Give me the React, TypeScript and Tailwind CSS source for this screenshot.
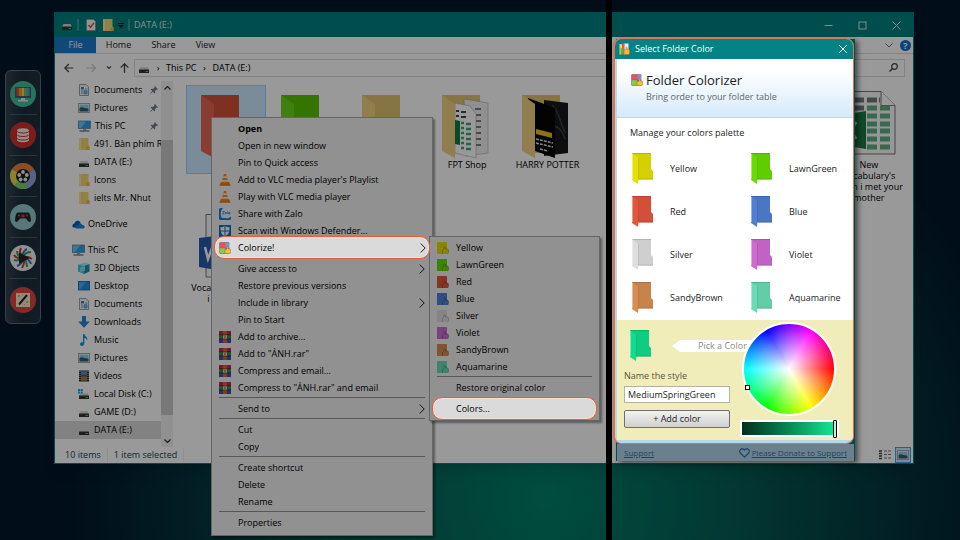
import React, { useState } from "react";
import clsx from "clsx";

const FOLDER_COLORS = [
  { name: "Yellow", color: "#e4e000" },
  { name: "LawnGreen", color: "#66dc00" },
  { name: "Red", color: "#e2563d" },
  { name: "Blue", color: "#4f80d2" },
  { name: "Silver", color: "#dedede" },
  { name: "Violet", color: "#cf6bd0" },
  { name: "SandyBrown", color: "#d68d4f" },
  { name: "Aquamarine", color: "#68dcb6" },
];

/* ---------- small icons ---------- */

const DriveIcon = ({ system = false }: { system?: boolean }) => (
  <svg className="h-3 w-3 shrink-0" viewBox="0 0 12 12">
    <path d="M2.5 5h7L11 8H1z" fill="#d8d8d8" />
    <rect x="1" y="7.5" width="10" height="3.5" rx="0.5" fill="#333" />
    <rect x="7.5" y="9" width="2.5" height="1" fill="#3fd23f" />
    {system && (
      <path d="M0 1h2v2H0zM2.6 1h2.2v2H2.6zM0 3.6h2v2H0zM2.6 3.6h2.2v2H2.6z" fill="#19a8e8" />
    )}
  </svg>
);

const SmallFolderIcon = () => (
  <svg className="h-3 w-3 shrink-0" viewBox="0 0 12 12">
    <path d="M1 0h9.5v7.5l1 1V12H1z" fill="#f5d672" />
    <path d="M1 0l2 1v11L1 11z" fill="#ffe79a" />
    <path d="M8.5 8.5h3V12h-3z" fill="#e5bd4d" />
  </svg>
);

const DocumentIcon = () => (
  <svg className="h-3 w-3 shrink-0" viewBox="0 0 12 12">
    <path d="M1.5.5h6.5l2.5 2.5v8.500h-9z" fill="#f4f6f8" stroke="#7f8a94" strokeWidth="0.8" />
    <path d="M3 3h3v2.500H3z" fill="#3b86c4" />
    <path d="M7 5h2.500M3 7h2M6 6.800h3v3H6zM3 9h2" stroke="#3b86c4" strokeWidth="0.8" fill="#8cc1e6" />
  </svg>
);

const PictureIcon = () => (
  <svg className="h-3 w-3 shrink-0" viewBox="0 0 12 12">
    <rect x="0.400" y="1.500" width="11.200" height="9" fill="#fff" stroke="#8d979e" strokeWidth="0.8" />
    <rect x="1.500" y="2.600" width="9" height="6.800" fill="#8fcdea" />
    <path d="M1.500 6c3-2 5 1 9 .5v2.900h-9z" fill="#2b5f73" />
  </svg>
);

const ComputerIcon = () => (
  <svg className="h-3 w-[13px] shrink-0" viewBox="0 0 13 12">
    <rect x="0.400" y="1" width="12.200" height="7.500" fill="#2e9fe6" stroke="#5c7f98" strokeWidth="0.7" />
    <path d="M1 1.500h7L3 8H1z" fill="#6cc6f7" />
    <path d="M5 9h3v1.500H5z" fill="#9aa7b0" />
    <path d="M1.500 11h10" stroke="#5c6c78" strokeWidth="1.200" />
  </svg>
);

const CloudIcon = () => (
  <svg className="h-3 w-[13px] shrink-0" viewBox="0 0 13 12">
    <path d="M1 9.500C-.5 7.500 1 5.500 2.500 5.500 3 2.500 7 1.800 8.500 4.500L5 9.500z" fill="#0a5db5" />
    <path d="M4 10.500c-1.500-1.500-.5-3.500 1.300-3.500.9-2.300 4-2.300 4.900 0 2.800 0 3.500 3.500.8 3.500z" fill="#1a7fe0" />
  </svg>
);

const CubeIcon = () => (
  <svg className="h-3 w-3 shrink-0" viewBox="0 0 12 12">
    <path d="M0 2.500L7 .5l4.500 1.500-5.500 2z" fill="#a9ecf7" />
    <path d="M0 2.500L6 4v8L0 9.500z" fill="#39c6dd" />
    <path d="M6 4l5.500-2v7.500L6 12z" fill="#1390ac" />
    <path d="M2 5.500l5-1.500v5l-5 .8z" fill="#7fe0ee" />
  </svg>
);

const DesktopIcon = () => (
  <svg className="h-3 w-3 shrink-0" viewBox="0 0 12 12">
    <rect x="0.400" y="1.500" width="11.200" height="8.500" fill="#1e90e8" stroke="#1361a8" strokeWidth="0.8" />
    <path d="M1 2h7L2 9.500H1z" fill="#45abf2" />
  </svg>
);

const DownloadIcon = () => (
  <svg className="h-3 w-3 shrink-0" viewBox="0 0 12 12">
    <path d="M4 0h4v5.500h3.800L6 11.800.2 5.500H4z" fill="#2584d8" />
  </svg>
);

const MusicIcon = () => (
  <svg className="h-3 w-3 shrink-0" viewBox="0 0 12 12">
    <path d="M5 0h1.300c.3 2 3.800 2.800 2.800 6.500C8.800 5 7.500 4.300 6.300 4v5.500C6.300 12.500 2 12.600 2 10.300 2 8.600 4 8 5 8.500z" fill="#1695e6" />
  </svg>
);

const VideoIcon = () => (
  <svg className="h-3 w-3 shrink-0" viewBox="0 0 12 12">
    <rect x="1" y="0.500" width="10" height="11" fill="#2e3238" />
    <rect x="3" y="1.200" width="6" height="4.300" fill="#5c87c8" />
    <rect x="3" y="6.300" width="6" height="4.400" fill="#a97f42" />
    <path d="M2 1v10M10 1v10" stroke="#c8ccd0" strokeWidth="0.9" strokeDasharray="1 1" />
  </svg>
);

const PinIcon = () => (
  <svg className="h-2 w-2 shrink-0" viewBox="0 0 8 8">
    <path d="M4.800 0L8 3.200l-.8.5-.6-.2-1.500 1.600.1 1.600-.7.700L2.900 5.700.3 8 0 7.700l2.300-2.600L.6 3.500l.700-.7 1.600.1L4.500 1.400 4.300.800z" fill="#6f7f8c" />
  </svg>
);

const ColorizerIcon = ({ className = "h-3 w-3" }: { className?: string }) => (
  <svg className={clsx("shrink-0", className)} viewBox="0 0 12 12">
    <rect x="0.300" y="0.300" width="10" height="11.400" rx="1" fill="#8a5a50" />
    <rect x="0.800" y="0.800" width="6" height="5" fill="#ee4f60" />
    <rect x="6.500" y="0.800" width="3.500" height="5" fill="#7c8fe0" />
    <rect x="0.800" y="6.200" width="5.500" height="5" fill="#7fd046" />
    <path d="M6 7.500l2-.5V4.500c1.500-.5 1.800 1 1.500 2.500H11c1 0 1 4.700-.3 4.700H6z" fill="#f3bd45" stroke="#8d6a22" strokeWidth="0.5" />
  </svg>
);

const DialogIcon = () => (
  <svg className="h-3 w-[11px] shrink-0" viewBox="0 0 11 12">
    <path d="M.5 1l4 .5V11l-4 .5z" fill="#f0d26a" />
    <path d="M3 .5h3.500v11H3z" fill="#e05848" />
    <path d="M5.500.5h4v7h-4z" fill="#dcebf5" />
    <path d="M1.500 5l3 1v4.500l-3 1z" fill="#58b848" />
    <path d="M5 7l2-.5V4.500c1.300-.5 1.500.8 1.300 2H10c1 0 1 5-.3 5H5z" fill="#f5b93a" stroke="#8d6a22" strokeWidth="0.4" />
  </svg>
);

const ColorTagIcon = ({ color }: { color: string }) => (
  <svg className="h-3 w-3 shrink-0" viewBox="0 0 12 12">
    <rect x="0" y="0" width="10" height="12" rx="0.600" fill={color} />
    <path d="M5.500 12V8.500L7 7V4.800c1.400-.5 1.700.6 1.500 2.200h2.200c1.200 0 1.200 4.200 0 5z" fill={color} />
    <path d="M5.500 12V8.500L7 7V4.800c1.400-.5 1.700.6 1.500 2.200h2.200c1.200 0 1.200 4.200 0 5" fill="none" stroke="#0004" strokeWidth="0.7" />
  </svg>
);

const VlcIcon = () => (
  <svg className="h-3 w-3 shrink-0" viewBox="0 0 12 12">
    <path d="M2 8h8l1.700 3.700H.3z" fill="#e87a10" />
    <path d="M5 0h2l2.600 9c-1.500 1-5.700 1-7.200 0z" fill="#f08a1c" />
    <path d="M4.400 2.200h3.200l.5 1.900H3.900zM3.300 6h5.400l.5 1.700H2.800z" fill="#f4f0ec" />
  </svg>
);

const ZaloIcon = () => (
  <svg className="h-3 w-3 shrink-0" viewBox="0 0 12 12">
    <rect width="12" height="12" rx="1.500" fill="#1a7fd6" />
    <path d="M4 0h8v8.500c-2 2.300-5.500 2-7 1.300l-2 .5C1 7 1.500 2.500 4 0z" fill="#eef6fc" />
    <path d="M3.500 3.500h2l-2 2.500h2M6.500 6V4.500h1.200V6M8.700 3.300V6M9.700 4.500h1.200V6H9.700z" fill="none" stroke="#1a7fd6" strokeWidth="0.7" />
  </svg>
);

const DefenderIcon = () => (
  <svg className="h-3 w-3 shrink-0" viewBox="0 0 12 12">
    <rect width="12" height="12" fill="#1570c4" />
    <path d="M6 1c1.400 1 3 1.200 4.500 1.200C10.500 6.500 10 9.300 6 11.300 2 9.300 1.500 6.500 1.500 2.200 3 2.200 4.600 2 6 1z" fill="#fff" />
    <path d="M6 1v10.500M1 6h10" stroke="#1570c4" strokeWidth="1" />
  </svg>
);

const RarIcon = () => (
  <svg className="h-3 w-3 shrink-0" viewBox="0 0 12 12">
    <rect width="12" height="4" fill="#c3265c" />
    <rect y="4" width="12" height="4" fill="#2a9a3c" />
    <rect y="8" width="12" height="4" fill="#3450c0" />
    <path d="M0 3.800h12M0 7.900h12" stroke="#222" strokeWidth="0.7" />
    <rect x="4" width="4" height="12" fill="#d9652c" />
    <rect x="3.500" y="4" width="5" height="4" rx="0.500" fill="#e8d9c4" stroke="#5a3418" strokeWidth="0.7" />
    <path d="M5 6h2" stroke="#a5402c" />
  </svg>
);

const ChevronRight = () => (
  <svg className="ml-auto h-[10px] w-[6px] shrink-0" viewBox="0 0 6 10">
    <path d="M.7.500L5.200 5 .7 9.500" fill="none" stroke="#222" strokeWidth="1" />
  </svg>
);

/* ---------- desktop dock ---------- */

const dockIcons = [
  {
    name: "Display",
    icon: (
      <>
        <circle cx="13" cy="13" r="13" fill="#3fbf9f" />
        <rect x="5" y="6" width="16" height="11" fill="#556" />
        <path d="M6.500 7h2.600v8H6.500z" fill="#d8503a" />
        <path d="M9.100 7h2.600v8H9.100z" fill="#f0a030" />
        <path d="M11.700 7h2.600v8h-2.600z" fill="#f2d94a" />
        <path d="M14.300 7h2.600v8h-2.600z" fill="#7cc95a" />
        <path d="M16.900 7h2.600v8h-2.600z" fill="#4aa6d8" />
        <path d="M11 17h4v2h3v1.500H8V19h3z" fill="#e5e5e5" />
      </>
    ),
  },
  {
    name: "Database",
    icon: (
      <>
        <circle cx="13" cy="13" r="13" fill="#cf3030" />
        <path d="M7 8.500c0-3 12-3 12 0v9.500c0 3-12 3-12 0z" fill="#f2eeee" />
        <path d="M7 9c0 2.700 12 2.700 12 0M7 12.500c0 2.700 12 2.700 12 0M7 16c0 2.700 12 2.700 12 0" fill="none" stroke="#cf3030" strokeWidth="1" />
      </>
    ),
  },
  {
    name: "Movies",
    icon: (
      <>
        <path d="M13 13L2 6A13 13 0 0 1 24 6z" fill="#e8833c" />
        <path d="M13 13l11-7a13 13 0 0 1-9 20z" fill="#8fa9d4" />
        <path d="M13 13l4 12.500A13 13 0 0 1 3 21z" fill="#7acb6b" />
        <path d="M13 13L4 22.500A13 13 0 0 1 2 6z" fill="#ead850" />
        <circle cx="13" cy="13" r="7" fill="#1b1b1b" />
        <circle cx="13" cy="9" r="1.900" fill="#eee" />
        <circle cx="16.800" cy="12" r="1.900" fill="#eee" />
        <circle cx="15.300" cy="16.500" r="1.900" fill="#eee" />
        <circle cx="10.700" cy="16.500" r="1.900" fill="#eee" />
        <circle cx="9.200" cy="12" r="1.900" fill="#eee" />
      </>
    ),
  },
  {
    name: "Games",
    icon: (
      <>
        <circle cx="13" cy="13" r="13" fill="#8fc8cc" />
        <path d="M8 8.500h10c2 0 2.800 4 3 8.500-2 2.500-3.500-.5-5-2.500h-6c-1.500 2-3 5-5 2.500.2-4.500 1-8.500 3-8.500z" fill="#26262a" />
        <circle cx="13" cy="12" r="1.800" fill="#d83030" />
        <circle cx="9" cy="11.500" r="1" fill="#777" />
        <circle cx="17" cy="11.500" r="1" fill="#777" />
      </>
    ),
  },
  {
    name: "Player",
    icon: (
      <>
        <circle cx="13" cy="13" r="13" fill="#eef0f0" />
        <path d="M13 13c-3-3-4-6-2-10M13 13c4-2 6-1 9 1M13 13c2 4 1 7-1 10M13 13c-4 1-7 0-9-3" fill="none" stroke="#d03434" strokeWidth="2" />
        <path d="M13 13c-1-4 1-8 4-9M13 13c4 0 7 3 8 6M13 13c0 4-3 7-6 8" fill="none" stroke="#2f6fc0" strokeWidth="2" />
        <path d="M13 13c1-4 4-6 8-6M13 13c3 2 4 5 4 9M13 13c-3 2-6 3-9 2M13 13C9 12 7 9 7 6" fill="none" stroke="#2da35a" strokeWidth="2" />
        <path d="M9 7.500l11 5.500-11 6z" fill="#26262a" />
      </>
    ),
  },
  {
    name: "Magic",
    icon: (
      <>
        <circle cx="13" cy="13" r="13" fill="#dd4444" />
        <rect x="6" y="6" width="14" height="14" fill="#f3e8cf" />
        <path d="M9 17.500l8-9.500" stroke="#26262a" strokeWidth="2" />
        <path d="M8 8h2v2H8zM12 7h1v1h-1zM16 14h2v2h-2zM14 17h1v1h-1z" fill="#d9b35c" />
      </>
    ),
  },
];

const Dock = () => (
  <nav className="absolute left-[5px] top-[70px] flex w-9 flex-col divide-y divide-slate-500/60 rounded-md border border-[#5d6b78] bg-linear-to-r from-[#35424e] via-[#1b2c3a] to-[#1e303e] px-[3px] py-[3px]">
    {dockIcons.map((item) => (
      <button key={item.name} aria-label={item.name} className="flex h-[41px] items-center justify-center">
        <svg className="h-[26px] w-[26px]" viewBox="0 0 26 26">
          {item.icon}
        </svg>
      </button>
    ))}
  </nav>
);

/* ---------- explorer window ---------- */

const BigFolder = ({ color, content }: { color: string; content?: React.ReactNode }) => (
  <svg className="h-16 w-[50px] shrink-0" viewBox="0 0 50 64">
    <path d="M0 0h38v58H13z" fill={color} />
    <path d="M0 0h38v58H13z" fill="#0001" />
    {content}
    <path d="M0 0l13 9v54L0 56z" fill={color} />
    <path d="M0 0l13 9v54L0 56z" fill="#fff" opacity="0.1" />
  </svg>
);

const SheetPages = () => (
  <>
    <path d="M22 4l24 4v50l-22 3z" fill="#f1f1f1" stroke="#999" strokeWidth="0.5" />
    <path d="M33 14h6M33 20h6M33 26h6M33 32h6M33 38h6M33 44h6M33 50h6" stroke="#555" strokeWidth="1.500" />
    <path d="M13 8l15 3 6 8v44l-21-5z" fill="#fff" stroke="#999" strokeWidth="0.5" />
    <path d="M14 16h3M19 17h5M14 21h3M19 22h5" stroke="#444" strokeWidth="2" />
    <path d="M19 28h3M24 29h5M19 33h3M24 34h5M19 38h3M24 39h5M19 43h3M24 44h5M19 48h3M24 49h5M19 53h3M24 54h5" stroke="#43a376" strokeWidth="2.500" />
    <path d="M13 25l5 1v24l-5-1z" fill="#107c41" />
  </>
);

const MoviePages = () => (
  <>
    <path d="M22 5l24 3v50l-24 3z" fill="#16181a" />
    <path d="M30 10c9 8 8 22 14 28M28 32c7-3 12 3 15 12" fill="none" stroke="#3a3e42" strokeWidth="1.500" />
    <path d="M6 3l27 10v50L13 56z" fill="#050505" />
    <path d="M14 34l16 4v5l-16-4z" fill="#e5c21a" />
    <path d="M14 44l17 4M14 48l17 4M18 54l8 2" stroke="#ddd" strokeWidth="1.500" strokeDasharray="3 1" />
  </>
);

const ExcelIcon = () => (
  <svg className="-mt-1 mb-1 h-16 w-[54px] shrink-0" viewBox="0 0 54 64">
    <path d="M5 .5h34l14 14V63H5z" fill="#fafafa" stroke="#777" />
    <path d="M39 .5v14h14" fill="#fff" stroke="#777" />
    <path d="M8 9h14M25 9h10M37 9h1M8 17h14" stroke="#777" strokeWidth="5" />
    <path d="M25 17h10M38 17h10M25 25h10M38 25h10M25 33h10M38 33h10M25 40h10M38 40h10M25 48h10M38 48h10M25 56h10M38 56h10" stroke="#5fae84" strokeWidth="5" />
    <path d="M0 24l24-4v38L0 54z" fill="#1b7a45" />
    <path d="M4 32l10 16M14 31L4 48" stroke="#fff" strokeWidth="3" />
  </svg>
);

const WordIcon = () => (
  <svg className="-mt-1 mb-1 h-16 w-[54px] shrink-0" viewBox="0 0 54 64">
    <path d="M7 .5h32l14 14V63H7z" fill="#fafafa" stroke="#777" />
    <path d="M0 24l24-3v36L0 53z" fill="#2a5ab0" />
    <path d="M6 33l3 12 4-11 4 11 3-12" fill="none" stroke="#fff" strokeWidth="2.500" />
  </svg>
);

const quickAccess = [
  { label: "Documents", icon: <DocumentIcon />, pinned: true },
  { label: "Pictures", icon: <PictureIcon />, pinned: true },
  { label: "This PC", icon: <ComputerIcon />, pinned: true },
  { label: "491. Bàn phím R", icon: <SmallFolderIcon /> },
  { label: "DATA (E:)", icon: <DriveIcon /> },
  { label: "Icons", icon: <SmallFolderIcon /> },
  { label: "ielts Mr. Nhut", icon: <SmallFolderIcon /> },
];

const thisPc = [
  { label: "3D Objects", icon: <CubeIcon /> },
  { label: "Desktop", icon: <DesktopIcon /> },
  { label: "Documents", icon: <DocumentIcon /> },
  { label: "Downloads", icon: <DownloadIcon /> },
  { label: "Music", icon: <MusicIcon /> },
  { label: "Pictures", icon: <PictureIcon /> },
  { label: "Videos", icon: <VideoIcon /> },
  { label: "Local Disk (C:)", icon: <DriveIcon system /> },
  { label: "GAME (D:)", icon: <DriveIcon /> },
  { label: "DATA (E:)", icon: <DriveIcon />, active: true },
];

type TreeItemProps = {
  label: string;
  icon: React.ReactNode;
  root?: boolean;
  pinned?: boolean;
  active?: boolean;
};

const TreeItem = ({ label, icon, root, pinned, active }: TreeItemProps) => (
  <button
    className={clsx(
      "flex h-[18px] w-full items-center overflow-hidden whitespace-nowrap text-left",
      root ? "gap-[3px] pl-[17px]" : "gap-1 pl-[23px]",
      active && "bg-[#d9d9d9]"
    )}
  >
    {icon}
    <span>{label}</span>
    {pinned && (
      <span className="ml-auto pr-[3px]">
        <PinIcon />
      </span>
    )}
  </button>
);

const Sidebar = () => (
  <div className="flex w-[118px] shrink-0">
    <div className="min-w-0 flex-1">
      {quickAccess.map((item) => (
        <TreeItem key={item.label} {...item} />
      ))}
      <div className="py-2">
        <TreeItem label="OneDrive" icon={<CloudIcon />} root />
      </div>
      <TreeItem label="This PC" icon={<ComputerIcon />} root />
      {thisPc.map((item) => (
        <TreeItem key={item.label} {...item} />
      ))}
    </div>
    <div className="flex w-3 flex-col items-center bg-[#f0f0f0]">
      <svg className="my-[5px] h-1 w-[7px]" viewBox="0 0 7 4">
        <path d="M.5 3.500l3-3 3 3" fill="none" stroke="#333" strokeWidth="1.200" />
      </svg>
      <div className="mb-[24px] mt-[45px] w-full flex-1 bg-[#c9c9c9]" />
      <svg className="mb-1 h-1 w-[7px]" viewBox="0 0 7 4">
        <path d="M.5.500l3 3 3-3" fill="none" stroke="#333" strokeWidth="1.200" />
      </svg>
    </div>
  </div>
);

const Tile = ({ label, selected, children }: { label: React.ReactNode; selected?: boolean; children: React.ReactNode }) => (
  <button
    className={clsx(
      "flex h-[89px] flex-col items-center border pt-[9px] text-center leading-[11px]",
      selected ? "border-[#99d1ff] bg-[#cce8ff]" : "border-transparent"
    )}
  >
    {children}
    <span className="px-1">{label}</span>
  </button>
);

const Explorer = () => (
  <main className="absolute left-[54px] right-[46px] top-3 border border-[#008080] bg-white text-[9px] shadow-lg">
    <header className="flex h-6 items-center bg-[#008080] pl-[6px] text-[#dfe9e9]">
      <DriveIcon />
      <span className="mx-1 h-3 w-[2px] bg-[#3f9a9a]" />
      <svg className="mx-[3px] h-3 w-[10px]" viewBox="0 0 10 12">
        <path d="M.5.500h7l2 2v9h-9z" fill="#f5f5f5" stroke="#888" strokeWidth="0.6" />
        <path d="M2.500 6l2 2.300 3.500-4.500" fill="none" stroke="#e0532d" strokeWidth="1.400" />
      </svg>
      <span className="ml-[3px]">
        <SmallFolderIcon />
      </span>
      <svg className="ml-1 h-[5px] w-[6px]" viewBox="0 0 6 5">
        <path d="M0 0h6v1H0zM0 2h6L3 5z" fill="#111" />
      </svg>
      <span className="mx-1 h-3 w-[2px] bg-[#3f9a9a]" />
      <h1>DATA (E:)</h1>
      <div className="ml-auto flex items-center gap-[25px] pr-[12px]">
        <button aria-label="Minimize">
          <svg className="h-[9px] w-[9px]" viewBox="0 0 9 9">
            <path d="M.5 4.500h8" stroke="#dfe9e9" />
          </svg>
        </button>
        <button aria-label="Maximize">
          <svg className="h-[9px] w-[9px]" viewBox="0 0 9 9">
            <rect x="1" y="1" width="7" height="7" fill="none" stroke="#dfe9e9" />
          </svg>
        </button>
        <button aria-label="Close">
          <svg className="h-[9px] w-[9px]" viewBox="0 0 9 9">
            <path d="M.5.500l8 8M8.500.500l-8 8" stroke="#dfe9e9" />
          </svg>
        </button>
      </div>
    </header>

    <div className="flex h-[17px] items-center border-b border-[#dadbdc] text-[#222]">
      <button className="h-full w-[41px] bg-[#1979ca] text-white">File</button>
      <button className="w-[45px]">Home</button>
      <button className="w-[45px]">Share</button>
      <button className="w-[39px]">View</button>
      <svg className="ml-auto h-[5px] w-2" viewBox="0 0 8 5">
        <path d="M.5.500l3.500 3.500L7.500.500" fill="none" stroke="#777" />
      </svg>
      <button aria-label="Help" className="ml-[7px] mr-[2px] size-[11px] rounded-full bg-[#0f6fd0] text-[9px] font-bold leading-[11px] text-white">
        ?
      </button>
    </div>

    <div className="flex h-[27px] items-center pl-[9px] pr-2">
      <svg className="h-[10px] w-14 shrink-0" viewBox="0 0 56 10" fill="none" strokeWidth="1.200">
        <path d="M.8 5h8.500M4.800 1L.8 5l4 4" stroke="#444" />
        <path d="M22.500 5h9M27.500 1l4 4-4 4" stroke="#ccc" />
        <path d="M43 3.500l2 2 2-2" stroke="#555" />
      </svg>
      <svg className="h-[10px] w-[9px] shrink-0" viewBox="0 0 9 10">
        <path d="M4.500 9.800V.8M.7 4.600L4.500.8l3.800 3.800" fill="none" stroke="#444" strokeWidth="1.300" />
      </svg>
      <div className="ml-[5px] flex h-[18px] flex-1 items-center border border-[#d9d9d9] pl-[3px]">
        <DriveIcon />
        <span className="w-4 text-center">›</span>
        <span>This PC</span>
        <span className="w-4 text-center">›</span>
        <span>DATA (E:)</span>
      </div>
      <div className="ml-2 flex h-[18px] w-[150px] items-center border border-[#d9d9d9]">
        <input aria-label="Search" className="min-w-0 flex-1 outline-none" />
        <svg className="mr-[6px] h-[9px] w-[9px]" viewBox="0 0 9 9">
          <circle cx="5.500" cy="3.500" r="2.800" fill="none" stroke="#444" strokeWidth="1.200" />
          <path d="M3.500 5.500l-3 3" stroke="#444" strokeWidth="1.500" />
        </svg>
      </div>
    </div>

    <div className="flex h-[366px]">
      <Sidebar />
      <div className="grid flex-1 grid-cols-9 content-start gap-y-[34px] pl-[13px] pr-1 pt-[4px]">
        <Tile label="" selected>
          <BigFolder color="#e2563d" />
        </Tile>
        <Tile label="">
          <BigFolder color="#5ed000" />
        </Tile>
        <Tile label="">
          <BigFolder color="#efcf77" />
        </Tile>
        <Tile label="FPT Shop">
          <BigFolder color="#efcf77" content={<SheetPages />} />
        </Tile>
        <Tile label="HARRY POTTER">
          <BigFolder color="#efcf77" content={<MoviePages />} />
        </Tile>
        <div className="col-span-3" />
        <Tile label="New Vocabulary's when i met your mother">
          <ExcelIcon />
        </Tile>
        <Tile
          label={
            <span className="block w-[70px] text-left">
              <span className="block">Voca</span>
              <span className="block pl-4">i</span>
            </span>
          }
        >
          <WordIcon />
        </Tile>
      </div>
    </div>

    <footer className="flex h-4 items-center pl-[10px] text-[#1e395b]">
      <span className="border-r border-[#eee] pr-[6px]">10 items</span>
      <span className="border-r border-[#eee] px-[6px]">1 item selected</span>
      <svg className="ml-auto h-[10px] w-3" viewBox="0 0 12 10">
        <path d="M0 1h3M0 3.500h3M0 6h3M0 8.500h3" stroke="#444" strokeWidth="1.500" />
        <path d="M5 1h3M9 1h3M5 4.500h3M9 4.500h3M5 8h3M9 8h3" stroke="#777" />
      </svg>
      <span className="ml-1 mr-[2px] flex h-4 w-4 items-center justify-center border border-[#3ba3dc] bg-[#cce8ff]">
        <PictureIcon />
      </span>
    </footer>
  </main>
);

/* ---------- context menus ---------- */

type MenuEntry = { label: string; icon?: React.ReactNode; sub?: boolean; bold?: boolean; focus?: boolean };

const menuGroups: MenuEntry[][] = [
  [
    { label: "Open", bold: true },
    { label: "Open in new window" },
    { label: "Pin to Quick access" },
    { label: "Add to VLC media player's Playlist", icon: <VlcIcon /> },
    { label: "Play with VLC media player", icon: <VlcIcon /> },
    { label: "Share with Zalo", icon: <ZaloIcon /> },
    { label: "Scan with Windows Defender...", icon: <DefenderIcon /> },
    { label: "Colorize!", icon: <ColorizerIcon />, sub: true, focus: true },
  ],
  [
    { label: "Give access to", sub: true },
    { label: "Restore previous versions" },
    { label: "Include in library", sub: true },
    { label: "Pin to Start" },
    { label: "Add to archive...", icon: <RarIcon /> },
    { label: 'Add to "ẢNH.rar"', icon: <RarIcon /> },
    { label: "Compress and email...", icon: <RarIcon /> },
    { label: 'Compress to "ẢNH.rar" and email', icon: <RarIcon /> },
  ],
  [{ label: "Send to", sub: true }],
  [{ label: "Cut" }, { label: "Copy" }],
  [{ label: "Create shortcut" }, { label: "Delete" }, { label: "Rename" }],
  [{ label: "Properties" }],
];

const colorGroups: MenuEntry[][] = [
  FOLDER_COLORS.map(({ name, color }) => ({ label: name, icon: <ColorTagIcon color={color} /> })),
  [{ label: "Restore original color" }],
  [{ label: "Colors...", focus: true }],
];

const Menu = ({ groups, className }: { groups: MenuEntry[][]; className: string }) => (
  <div role="menu" className={clsx("absolute border border-[#a8a8a8] bg-[#f2f2f2] px-[2px] text-[9px] text-black shadow-[2px_2px_2px_#0006]", className)}>
    {groups.map((group, i) => (
      <React.Fragment key={i}>
        {i > 0 && !group[0].focus && <hr className="mx-[5px] mb-[2px] mt-px border-[#909090]" />}
        {i > 0 && group[0].focus && <div className="h-1" />}
        {group.map((item) => (
          <button
            key={item.label}
            role="menuitem"
            className={clsx(
              "flex w-full items-center gap-[7px] whitespace-nowrap text-left",
              item.focus
                ? "relative z-20 -my-[3px] h-[23px] rounded-[10px] border border-[#e0603c] bg-[#dadada] pl-[4px] pr-[3px] shadow-[inset_0_0_0_1px_#f6ded6]"
                : "h-[17px] px-[5px]",
              item.bold && "font-bold"
            )}
          >
            <span className="size-3 shrink-0">{item.icon}</span>
            <span>{item.label}</span>
            {item.sub && <ChevronRight />}
          </button>
        ))}
      </React.Fragment>
    ))}
  </div>
);

/* ---------- folder colorizer dialog ---------- */

const PaletteFolder = ({ color }: { color: string }) => (
  <svg className="h-[31px] w-[22px] shrink-0" viewBox="0 0 22 31">
    <path d="M0 0h19v16l2 2v8.500H4z" fill={color} />
    <path d="M0 0h19v16l2 2v8.500H4z" fill="#0001" />
    <path d="M0 .4h19M6 26.200h15" stroke="#0003" strokeWidth="0.8" />
    <path d="M0 0l6.500 5v20L6 31l-6-4z" fill={color} />
    <path d="M.5 1v25" stroke="#fff6" />
    <path d="M6.500 5v21" stroke="#0002" strokeWidth="0.800" />
  </svg>
);

const ColorWheel = () => (
  <div className="relative size-[94px] rounded-full border-2 border-white bg-[conic-gradient(from_90deg,#f00,#ff0,#0f0,#0ff,#00f,#f0f,#f00)]">
    <div className="size-full rounded-full bg-[radial-gradient(circle,#fff_0%,#fff0_70%)]" />
    <span className="absolute left-px top-[61px] size-[5px] border border-black bg-white" />
  </div>
);

const ColorDialog = () => {
  const [name, setName] = useState("MediumSpringGreen");
  const [brightness, setBrightness] = useState(100);

  return (
    <section className="absolute left-[616px] top-[39px] w-[239px] bg-[#008080] text-[9px] text-[#1c1c1c] shadow-[3px_2px_5px_#0008]">
      <div className="relative z-20 -ml-[3px] -mt-px mr-px overflow-hidden rounded-[8px] border border-l-2 border-[#dd7150] bg-[#b3d9ea] pb-[3px]">
        <header className="flex h-5 items-center gap-[5px] bg-[#048387] pl-[4px] pr-[6px] text-white">
          <DialogIcon />
          <h2>Select Folder Color</h2>
          <button aria-label="Close dialog" className="ml-auto">
            <svg className="h-2 w-2" viewBox="0 0 8 8">
              <path d="M.3.300l7.400 7.400M7.700.300L.3 7.700" stroke="#fff" />
            </svg>
          </button>
        </header>

        <div className="ml-[2px] flex h-[59px] gap-[3px] border-b border-[#c5d6e2] bg-linear-to-b from-white from-20% to-[#d5eafa] pl-[14px] pt-[12px]">
          <ColorizerIcon className="mt-[3px] h-3 w-3" />
          <div>
            <h3 className="text-[13px] leading-[18px]">Folder Colorizer</h3>
            <p className="leading-4 text-[#666]">Bring order to your folder table</p>
          </div>
        </div>

        <div className="ml-[2px] bg-white pb-px">
          <h4 className="h-[29px] pl-[13px] pt-2 leading-[14px]">Manage your colors palette</h4>
          <div className="grid grid-cols-[119px_1fr] pl-[15px]">
            {FOLDER_COLORS.map((item) => (
              <button key={item.name} className="flex h-[43px] items-center gap-4 text-left">
                <PaletteFolder color={item.color} />
                <span>{item.name}</span>
              </button>
            ))}
          </div>
        </div>

        <div className="ml-[2px] flex bg-[#f1edbb] pb-[3px] pl-[7px]">
          <div className="w-[106px] shrink-0 pt-[10px]">
            <div className="flex h-8 gap-5 pl-[6px]">
              <PaletteFolder color="#10dc8c" />
              <div className="mt-[10px] flex h-3 shrink-0 items-center">
                <svg className="h-3 w-2" viewBox="0 0 8 12">
                  <path d="M8 0v12L0 6z" fill="#fff" />
                </svg>
                <span className="h-3 w-[86px] whitespace-nowrap bg-white pl-[18px] leading-3 text-[#8c8c8c]">Pick a Color</span>
              </div>
            </div>
            <label htmlFor="style-name" className="mt-2 block leading-3 text-[#55523e]">
              Name the style
            </label>
            <input
              id="style-name"
              type="text"
              value={name}
              onChange={(e) => setName(e.target.value)}
              className="mt-1 h-[17px] w-full border border-[#b4b4a4] bg-white px-[3px] outline-none"
            />
            <button className="mt-[7px] h-[18px] w-full rounded-[2px] border border-[#707070] bg-linear-to-b from-[#f2f2f2] to-[#cfcfcf]">
              + Add color
            </button>
          </div>
          <div className="relative ml-[10px] flex flex-col items-start gap-1 pt-[2px]">
            <span className="pl-[2px]">
              <ColorWheel />
            </span>
            <input
              type="range"
              aria-label="Brightness"
              min={0}
              max={100}
              value={brightness}
              onChange={(e) => setBrightness(Number(e.target.value))}
              className="h-[17px] w-[99px] appearance-none border-2 border-white bg-linear-to-r from-[#02301c] to-[#12ee98] [&::-webkit-slider-thumb]:h-[18px] [&::-webkit-slider-thumb]:w-1 [&::-webkit-slider-thumb]:appearance-none [&::-webkit-slider-thumb]:rounded-[1px] [&::-webkit-slider-thumb]:border [&::-webkit-slider-thumb]:border-black [&::-webkit-slider-thumb]:bg-[#bfeedd]"
            />
          </div>
        </div>
      </div>

      <footer className="mx-px flex h-[17px] items-center justify-between bg-[#b3d5ea] px-[7px] text-[8px] text-[#2878b8]">
        <a href="#support" className="underline">
          Support
        </a>
        <a href="#donate" className="flex items-center gap-[2px] underline">
          <svg className="h-[10px] w-[11px]" viewBox="0 0 11 10">
            <path d="M5.500 9.200L1.300 5C-.8 2.500 3-1 5.500 2 8-1 11.800 2.500 9.700 5z" fill="none" stroke="#2878b8" strokeWidth="1.200" />
          </svg>
          Please Donate to Support
        </a>
      </footer>
    </section>
  );
};

const App = () => {
  return (
    <div className="relative h-screen overflow-hidden bg-[radial-gradient(ellipse_50%_90%_at_57%_92%,#00816a_0%,#055c55_40%,#032c38_80%,#02172a_100%)] font-['Open_Sans','Noto_Sans',sans-serif]">
      <Dock />
      <Explorer />
      <Menu groups={menuGroups} className="left-[211px] top-[117px] w-[222px] pb-1 pt-[2px]" />
      <Menu groups={colorGroups} className="left-[429px] top-[236px] w-[171px] pb-[3px] pt-[2px]" />
      <ColorDialog />
      {/* dims everything except the highlighted steps */}
      <div className="pointer-events-none absolute inset-0 z-10 bg-black/40" />
      {/* splits the two steps */}
      <div className="absolute inset-y-0 left-[606px] z-10 w-[6px] bg-black" />
    </div>
  );
};

export default App;
